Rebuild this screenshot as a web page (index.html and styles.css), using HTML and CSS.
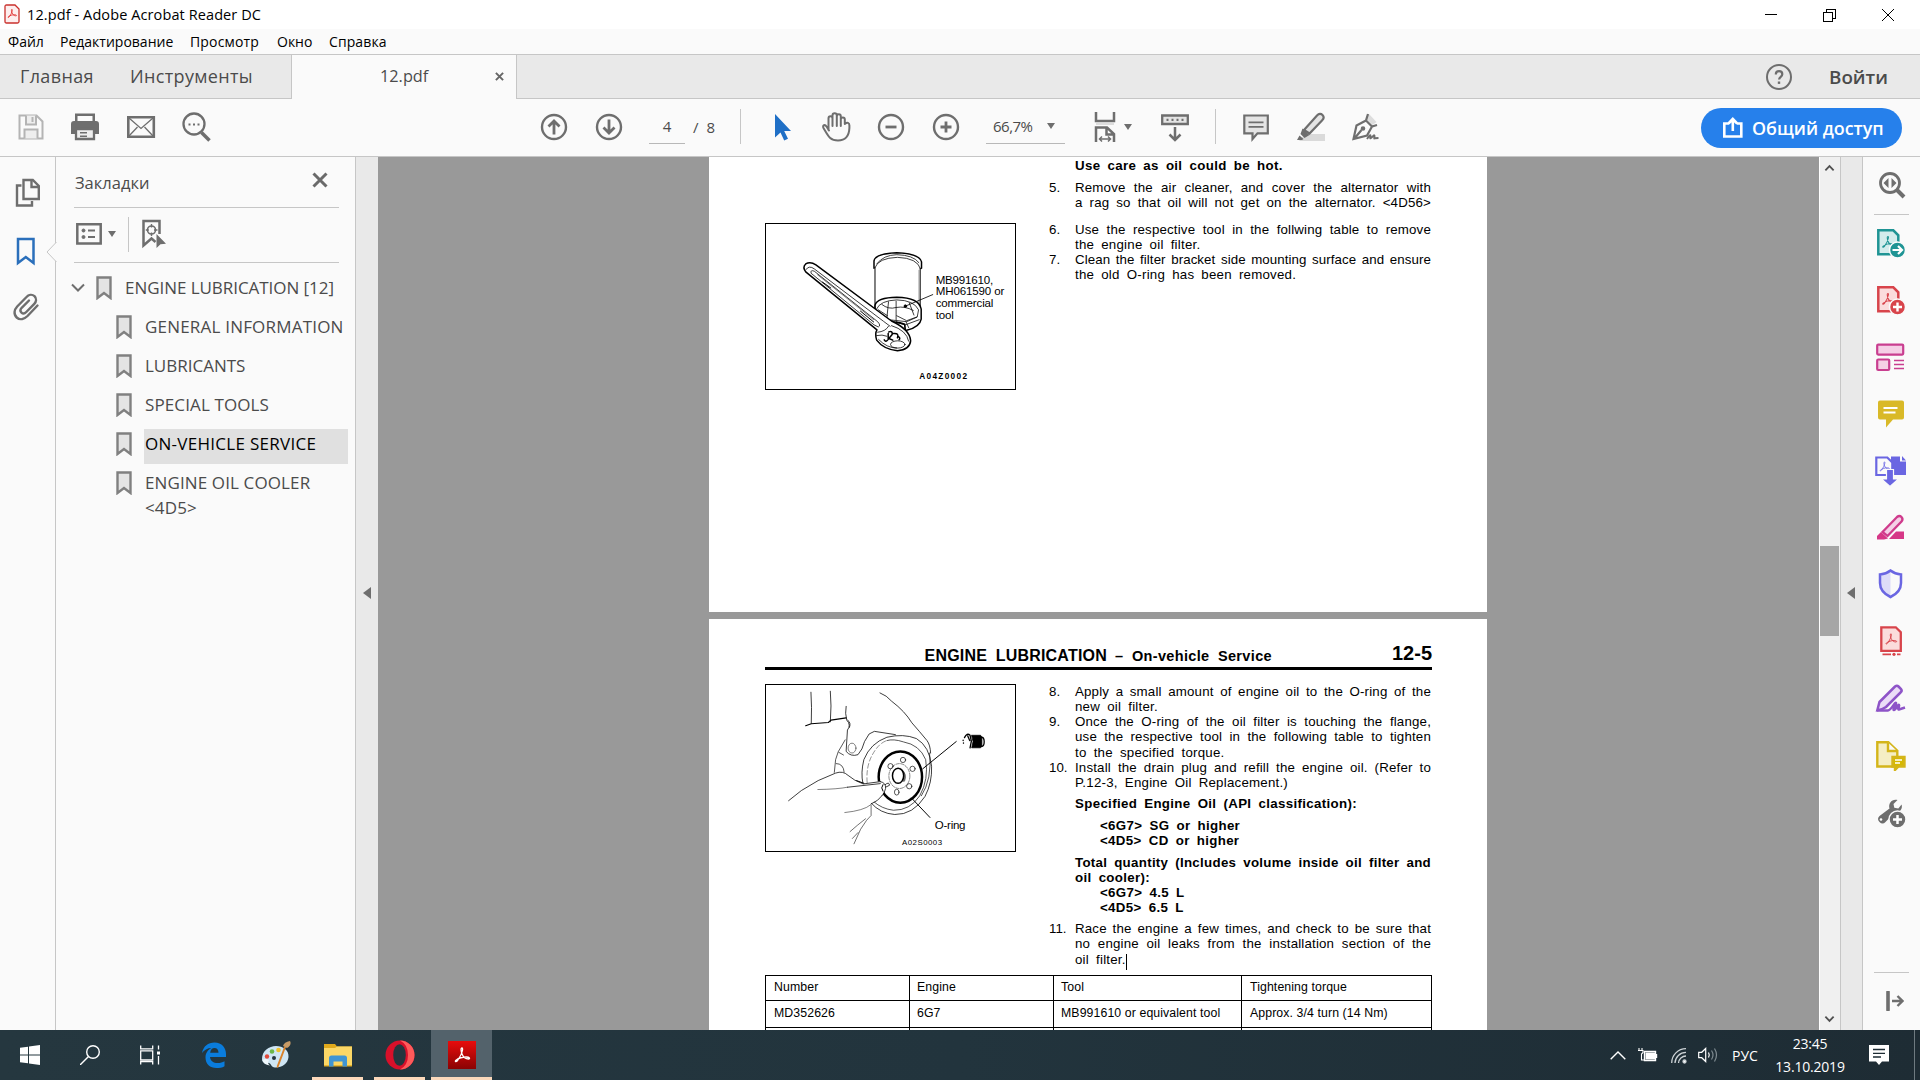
FILE: index.html
```html
<!DOCTYPE html>
<html lang="ru">
<head>
<meta charset="utf-8">
<title>12.pdf - Adobe Acrobat Reader DC</title>
<link rel="stylesheet" href="styles.css">
</head>
<body>
<svg class="defs" width="0" height="0" aria-hidden="true">
  <defs>
    <symbol id="bm" viewBox="0 0 16 24"><path d="M1.5 1.5h13v20.5l-6.500-5-6.500 5z" fill="#e4e4e4" stroke="#808080" stroke-width="2.4"/></symbol>
    <symbol id="acro" viewBox="0 0 20 20"><path d="M10 3c-1.500 0-1 3.500 0 6 1.200 3 4 5 6.500 5 2 0 1-2-2-2-4 0-8 1.300-10.500 3.200-1.500 1.300 0 2.300 1.500.3C8 12 10 8 10.500 5c.2-1.200 0-2-.5-2z" fill="none" stroke="currentColor" stroke-width="1.300"/></symbol>
    <symbol id="circ" viewBox="0 0 32 32"><circle cx="16" cy="16" r="12" fill="none" stroke="#6e6e6e" stroke-width="2.400"/></symbol>
  </defs>
</svg>
<div class="window">
  <header class="titlebar">
    <svg class="app-icon" viewBox="0 0 16 20"><path d="M1 2.500Q1 1 2.500 1H11l4 4v12.500q0 1.500-1.500 1.500h-11Q1 19 1 17.500z" fill="#fdeeee" stroke="#c9302c" stroke-width="1.300"/><use href="#acro" x="2" y="3" width="12" height="13" color="#d22"/></svg>
    <span class="title">12.pdf - Adobe Acrobat Reader DC</span>
    <svg class="win-ctl" viewBox="0 0 130 14" fill="none" stroke="#000" shape-rendering="crispEdges"><path d="M0 6.500h12M58.500 4.500h9v9h-9zM61 4.500v-3h9v9h-2.500"/><path d="M117 1l12 12M129 1l-12 12" shape-rendering="auto"/></svg>
  </header>
  <nav class="menubar"><span class="m1">Файл</span><span class="m2">Редактирование</span><span class="m3">Просмотр</span><span class="m4">Окно</span><span class="m5">Справка</span></nav>
  <div class="tabs">
    <div class="tabs-left"><span class="t1">Главная</span><span class="t2">Инструменты</span></div>
    <div class="tab"><span class="tab-name">12.pdf</span><svg class="tab-x" viewBox="0 0 10 10"><path d="M1 1l8 8M9 1L1 9" stroke="#666" stroke-width="2.200"/></svg></div>
    <div class="tabs-right">
      <svg class="help" viewBox="0 0 28 28" fill="none" stroke="#6e6e6e"><circle cx="14" cy="14" r="12" stroke-width="2"/><path d="M10.800 11.500c0-4.500 6.500-4.200 6.500-.3 0 2.600-3.200 2.600-3.200 5.300" stroke-width="2.200"/><path d="M14 18.500v2.400" stroke-width="2.400"/></svg>
      <span class="login">Войти</span>
    </div>
  </div>
  <div class="toolbar">
    <div class="group g-file">
      <svg viewBox="0 0 32 32" fill="none" stroke="#b4b4b4" stroke-width="2"><path d="M4.500 4.500h17l6 6v17h-23z"/><path d="M11 4.500v9h10v-9M9.500 27.500v-9h13v9" fill="#eee"/><path d="M17.500 6v5"/></svg>
      <svg viewBox="1 0 32 32" fill="#6e6e6e"><path d="M6 2.500h20V10H6zM8.500 5v6h15V5z" fill-rule="evenodd"/><path d="M2 13q0-3 3-3h22q3 0 3 3v10h-4v-4.500H6V23H2z"/><path d="M7 18h18v10H7z" fill="#eee" stroke="#6e6e6e" stroke-width="2.300"/><path d="M11 21h7v1.500h-7zM11 24.500h7V26h-7z"/></svg>
      <svg viewBox="0 0 32 32" fill="none" stroke="#6e6e6e" stroke-width="2.600"><path d="M3.300 6.300h25.500v19.500H3.300z"/><path d="M4 7l12 10.500L28 7M4 25l8.500-9M28 25l-8.500-9" stroke-width="1.300"/></svg>
      <svg viewBox="0 0 32 32" fill="none" stroke="#6e6e6e"><circle cx="14" cy="13" r="10.500" stroke-width="2.300"/><path d="M21.500 21.500l8 8" stroke-width="3.500"/><path d="M8.500 13.500h2M13 13.500h2M17.500 13.500h2" stroke-width="2"/></svg>
    </div>
    <div class="group g-nav">
      <svg viewBox="0 0 32 32" fill="none" stroke="#6e6e6e" stroke-width="2.800"><use href="#circ"/><path d="M16 23.500V10M10.500 15.500L16 10l5.500 5.500"/></svg>
      <svg viewBox="0 0 32 32" fill="none" stroke="#6e6e6e" stroke-width="2.800"><use href="#circ"/><path d="M16 8.500V22M10.500 16.500L16 22l5.500-5.500"/></svg>
    </div>
    <span class="page-no">4</span><span class="page-all"><i>/</i> 8</span>
    <i class="sep s1"></i>
    <div class="group g-zoom">
      <svg viewBox="-1 0 32 32"><path d="M9 3v23.500l5.500-5 3.700 8 3.800-1.800-3.800-7.700H25z" fill="#1f6fc6"/></svg>
      <svg viewBox="0 0 32 32" fill="none" stroke="#6e6e6e" stroke-width="2" stroke-linejoin="round" stroke-linecap="round"><path d="M8.500 19V7.500c0-3 4-3 4 0V15M12.500 15V4.500c0-3 4.300-3 4.300 0V15M16.800 15V5.500c0-3 4-3 4 0V15M20.800 15V8.500c0-2.800 4-2.800 4 0V13c2.500-2 4.600-1.500 4.600 1.500v2.500c-.4 9-4.400 12.500-11.400 12.500-8 0-9.500-4-14.500-12.500-1.500-3 1.500-3.800 3-1.500L9 19.500"/></svg>
      <svg viewBox="0 0 32 32" fill="none" stroke="#6e6e6e" stroke-width="2.800"><use href="#circ"/><path d="M10.500 16h11"/></svg>
      <svg viewBox="0 0 32 32" fill="none" stroke="#6e6e6e" stroke-width="2.800"><use href="#circ"/><path d="M10.500 16h11M16 10.500v11"/></svg>
    </div>
    <div class="zoom-box"><span>66,7%</span><i class="caret"></i></div>
    <svg class="ic fit" viewBox="0 0 32 32" fill="none" stroke="#6e6e6e" stroke-width="2.500"><path d="M7 1v9h18V1M7 31V16.500h11l7 6.500v8M17.500 16.500v7H25"/><path d="M7 12h18v2H7z" fill="#ddd" stroke="none"/><path d="M10.500 28h11M13 25.500L10.500 28l2.500 2.500M19 25.500l2.500 2.500-2.500 2.500" stroke-width="1.500"/></svg>
    <i class="caret c2"></i>
    <svg class="ic read" viewBox="0 0 32 32" fill="none" stroke="#6e6e6e" stroke-width="2.300"><path d="M3.200 4.500h25.600V13H3.200z" fill="#e4e4e4"/><path d="M7.500 8.800h2M12.500 8.800h2M17.500 8.800h2M22.500 8.800h2"/><path d="M16 16v12.500M10.500 23.500l5.500 5.500 5.500-5.500" stroke-width="2.500"/></svg>
    <i class="sep s2"></i>
    <div class="group g-mark">
      <svg viewBox="0 0 32 32" fill="#e4e4e4" stroke="#6e6e6e" stroke-width="2.200"><path d="M4.300 4.500h23.500v17.800H17.500L12.500 28v-5.700H4.300z"/><path d="M8.500 11.300h15M8.500 15.800h15" stroke-width="1.700"/></svg>
      <svg viewBox="0 0 32 32"><path d="M10 23h20v7H4z" fill="#dadada"/><path d="M9 19L22 4.500q3-3 5.500-.5t-.5 5.500L14.500 22.500z" fill="#e4e4e4" stroke="#6e6e6e" stroke-width="2.200"/><path d="M7.500 17.500l7 6.500-5 3-4-4zM4.500 24.500l4 3.500-1.500 1H2z" fill="#6e6e6e"/></svg>
      <svg viewBox="0 0 32 32" fill="none" stroke="#6e6e6e" stroke-width="2.200"><path d="M19 3l7.500 8-4 3-6.500-6.500z" fill="#ddd" stroke="none"/><path d="M18 3l-2 6.500 6 6 5-1.500M16 9.500L6.500 14.500 3.500 28l13.500-3.500 5-9M4 28l7.500-9"/><circle cx="13" cy="17.500" r="1.200"/><path d="M17 28c2-3 3.500-5 3.500-3s-1 3 .5 2 3.500-4 3.500-2-1 3 .5 2.200l3.500-.2" stroke-width="1.900"/></svg>
    </div>
    <button class="share"><svg viewBox="0 0 22 22" fill="none" stroke="#fff" stroke-width="2.600"><path d="M7 6.500H2.300v13h17v-13h-4.500M10.800 14V3M6.500 6.500l4.300-4.500 4.300 4.500"/></svg><span>Общий доступ</span></button>
  </div>

  <main class="work">
    <aside class="rail-left">
      <svg class="rl1" viewBox="0 0 26 30" fill="none" stroke="#6e6e6e" stroke-width="2.400"><path d="M8.500 2h9.300l6 6v13H8.500z"/><path d="M16.500 2v7h7"/><path d="M6.500 7.500H2v20h15V23"/></svg>
      <svg class="rl2" viewBox="0 0 20 30" fill="none" stroke="#2a6fbb" stroke-width="2.500"><path d="M2 2h15.500v24L9.800 20 2 26z"/></svg>
      <svg class="rl3" viewBox="0 0 28 30" fill="none" stroke="#6e6e6e" stroke-width="2.400" stroke-linecap="round"><path d="M25.500 13.500l-10 10.500c-3 3-7.500 4.500-10.800 1.500-3.500-3.300-2.300-8 .5-11L14.500 5c2-2.200 5.500-3 8-.8 2.300 2.300 1.800 5.500-.2 7.600l-8 8.200c-1.500 1.500-3.300 2-4.800.6s-1.200-3.300.2-4.800L17 8.500"/></svg>
    </aside>
    <aside class="panel">
      <svg class="notch" viewBox="0 0 11 20"><path d="M10.500 0L1 10l9.500 10" fill="#fafafa" stroke="#c6c6c6"/></svg>
      <div class="panel-head"><span>Закладки</span><svg viewBox="0 0 16 16"><path d="M1.500 1.500l13 13M14.500 1.500l-13 13" stroke="#6a6a6a" stroke-width="3"/></svg></div>
      <div class="panel-tools">
        <svg class="pt1" viewBox="0 0 26 22" fill="none" stroke="#6e6e6e"><path d="M1.300 1.300h23.400v19.200H1.300z" stroke-width="2.500"/><path d="M12 7.500h7M12 14h7" stroke-width="1.800"/><circle cx="7.500" cy="7.500" r="1.500" fill="#6e6e6e"/><circle cx="7.500" cy="14" r="1.500" fill="#6e6e6e"/></svg>
        <i class="caret"></i><i class="pt-sep"></i>
        <svg class="pt2" viewBox="0 0 26 30" fill="none" stroke="#6e6e6e"><path d="M18.500 15V2h-16v24.500l8-7 4 3.500" stroke-width="2.500"/><circle cx="10.500" cy="11" r="4" stroke-width="1.600"/><path d="M10.500 5v3.500M10.500 13.500V17M4.800 11h3M13 11h3.500" stroke-width="1.400"/><path d="M15.500 15v14l4-3.800 5.500-.5z" fill="#6e6e6e" stroke="none"/></svg>
      </div>
      <ul class="tree">
        <li class="root"><svg class="chev" viewBox="0 0 14 10"><path d="M1 1.500l6 6 6-6" fill="none" stroke="#6e6e6e" stroke-width="2"/></svg><svg class="b"><use href="#bm"/></svg><span class="w0">ENGINE LUBRICATION [12]</span></li>
        <li><svg class="b"><use href="#bm"/></svg><span class="w1">GENERAL INFORMATION</span></li>
        <li><svg class="b"><use href="#bm"/></svg><span class="w2">LUBRICANTS</span></li>
        <li><svg class="b"><use href="#bm"/></svg><span class="w3">SPECIAL TOOLS</span></li>
        <li><svg class="b"><use href="#bm"/></svg><span class="w4 sel">ON-VEHICLE SERVICE</span></li>
        <li class="two"><svg class="b"><use href="#bm"/></svg><span class="w5">ENGINE OIL COOLER<br>&lt;4D5&gt;</span></li>
      </ul>
    </aside>
    <div class="splitter sl"><i></i></div>
    <section class="doc">
      <article class="page p1">
        <div class="fig-col">
          <svg class="fig f1" viewBox="45 40 752 500" fill="none" stroke="#000" stroke-width="2.300" stroke-linecap="round" stroke-linejoin="round">
            <path d="M371 174V152Q374 130 440 127 510 130 515 155V174" stroke-width="4.500"/>
            <path d="M374 172Q384 143 442 141 503 143 512 176M380 160Q400 134 440 133 490 134 507 157"/>
            <path d="M374 172V306M511 174V292" stroke-width="3"/><path d="M507 180V286" stroke-width="1"/>
            <path d="M374 306V286Q380 263 440 262 508 263 514 298V328Q510 352 470 362" stroke-width="4.500"/>
            <path d="M379 297Q390 272 440 270 492 271 506 300L502 322 470 336 415 330 384 308M415 276L410 325M438 274V330M478 279L492 316M395 284Q415 300 438 293 465 288 490 302M384 300L412 318M440 318L470 333 500 322M420 332L465 346 508 330M440 334V350M468 336L476 354"/>
            <path d="M424 341Q440 334 464 344L466 364" stroke-width="5"/>
            <path d="M165 186Q153 171 164 161 178 152 195 164L424 334 Q480 360 482 394 480 420 442 424 400 420 379 392 373 372 380 361Z" fill="#fff" stroke-width="4.500"/>
            <path d="M165 178Q174 164 190 176L400 335 420 350M180 188Q178 178 190 183L382 336Q393 348 384 352L372 346Z"/>
            <path d="M200 194L370 330" stroke-width="1.500"/><path d="M215 216L240 234M330 304L370 337" stroke-width="3"/>
            <path d="M382 368Q406 366 415 350M379 378Q396 374 410 380M424 348Q470 362 476 395M385 390Q410 416 440 416"/>
            <ellipse cx="443" cy="405" rx="22" ry="11"/><path d="M416 367q12-4 10 8l-10 12 12 5M414 372v18M430 372q18-2 12 13M402 391q5 8 10 1M445 381q7 5 2 10" stroke-width="4.500"/>
            <path d="M466 289L549 254" stroke-width="2.500"/><circle cx="466" cy="289" r="4" fill="#000"/>
            <g class="cap"><text x="558" y="222" textLength="174">MB991610,</text><text x="558" y="255" textLength="208">MH061590 or</text><text x="558" y="291" textLength="175">commercial</text><text x="558" y="327" textLength="55">tool</text></g>
            <text class="code" x="508" y="511" textLength="145">A04Z0002</text>
          </svg>
        </div>
        <div class="text">
          <div class="ln bold w">Use care as oil could be hot.</div>
          <div class="step mt7"><b>5.</b><div><div class="j">Remove the air cleaner, and cover the alternator with</div><div class="j">a rag so that oil will not get on the alternator. &lt;4D56&gt;</div></div></div>
          <div class="step mt12"><b>6.</b><div><div class="j">Use the respective tool in the follwing table to remove</div><div class="w">the engine oil filter.</div></div></div>
          <div class="step"><b>7.</b><div><div class="j tight">Clean the filter bracket side mounting surface and ensure</div><div class="w">the old O-ring has been removed.</div></div></div>
        </div>
      </article>
      <article class="page p2">
        <div class="page-head"><h1><span class="h-a">ENGINE LUBRICATION</span> <span class="h-b">– On-vehicle Service</span></h1><span class="pg">12-5</span></div>
        <div class="cols">
        <div class="fig-col">
          <svg class="fig f2" viewBox="45 43 752 505" fill="none" stroke="#000" stroke-width="2.300" stroke-linecap="round" stroke-linejoin="round">
            <path d="M179 65Q182 110 180 160M238 62Q242 105 238 155M286 108Q282 130 288 150 302 165 290 180L286 245Q300 262 322 255 336 240 342 215L356 192 372 184 436 194M291 150Q302 158 296 172"/>
            <path d="M163 167L180 161 232 157 240 150 286 143" stroke-width="3.500"/>
            <path d="M389 67Q410 75 424 92 445 108 460 124 475 140 486 158 510 185 532 212 542 225 543 250"/>
            <ellipse cx="304" cy="235" rx="12" ry="15" stroke-width="1.500"/><path d="M283 210L262 246 254 270 250 310M264 248l14 8M256 282q22 0 24 26" stroke-width="2"/>
            <path d="M362 402Q390 434 434 437 490 438 526 382 548 340 546 290 540 230 500 206 460 190 410 202 360 220 340 270 330 310 337 342"/>
            <path d="M540 250Q548 330 515 380M410 212Q430 206 460 216 510 225 528 270 538 330 510 380 480 425 430 424 395 420 370 398" stroke-width="2"/>
            <path d="M350 340Q346 290 366 255 385 220 410 212" stroke-width="1.300" stroke-dasharray="14 8"/>
            <ellipse cx="451" cy="323" rx="66" ry="78" stroke-width="7.500"/>
            <ellipse cx="448" cy="320" rx="32" ry="38" stroke-width="1.400" stroke-dasharray="10 4"/>
            <ellipse cx="444" cy="319" rx="17" ry="23" stroke-width="4.500"/><path d="M452 296q16 16 8 40M456 300q14 12 6 36M458 303q14 14 6 32" stroke-width="1.500"/>
            <g stroke-width="2"><circle cx="459" cy="271" r="8"/><circle cx="421" cy="290" r="8"/><circle cx="488" cy="298" r="8"/><circle cx="478" cy="351" r="8"/><ellipse cx="440" cy="369" rx="7" ry="9"/></g>
            <path d="M250 310Q270 303 286 312 306 330 338 343L390 336Q408 344 405 364L395 378Q380 396 345 412L300 430 200 380Z" fill="#fff" stroke="none"/>
            <path d="M111 395L150 364Q200 330 254 311 276 303 292 318 310 334 338 344L390 337M290 354L390 343M390 337Q408 340 406 358 402 376 395 380M405 346q12-10 13 2l-10 5M395 380Q385 395 362 405"/>
            <path d="M200 361Q260 360 290 354M360 408Q340 425 282 431" stroke-width="1.500"/>
            <path d="M398 346q-8 10 0 20M318 334L340 342" stroke-width="3"/>
            <path d="M362 408V440L348 455 330 482 310 526M345 450L320 470 298 489M322 492L305 510" stroke-width="1.700"/>
            <path d="M519 298L621 215M485 387L541 446" stroke-width="3"/>
            <path d="M668 196h27l4 6v26l-4 6h-27l4-18z" fill="#000"/><path d="M698 202q8 0 8 14t-8 14" stroke-width="4"/><path d="M646 203q8-16 17-7l4 18-4 20M656 198l6 14M642 211v1M643 219v1" stroke-width="4"/>
            <text class="oring" x="556" y="480" textLength="93">O-ring</text><text class="code c-b" x="456" y="530" textLength="122">A02S0003</text>
          </svg>
        </div>
        <div class="text">
          <div class="step"><b>8.</b><div><div class="j">Apply a small amount of engine oil to the O-ring of the</div><div class="w">new oil filter.</div></div></div>
          <div class="step"><b>9.</b><div><div class="j">Once the O-ring of the oil filter is touching the flange,</div><div class="j">use the respective tool in the following table to tighten</div><div class="w">to the specified torque.</div></div></div>
          <div class="step"><b>10.</b><div><div class="j">Install the drain plug and refill the engine oil. (Refer to</div><div class="w">P.12-3, Engine Oil Replacement.)</div></div></div>
          <div class="ln bold w mt6">Specified Engine Oil (API classification):</div>
          <div class="ln bold w in mt7">&lt;6G7&gt; SG or higher</div>
          <div class="ln bold w in">&lt;4D5&gt; CD or higher</div>
          <div class="ln bold j mt6">Total quantity (Includes volume inside oil filter and</div>
          <div class="ln bold w">oil cooler):</div>
          <div class="ln bold w in">&lt;6G7&gt; 4.5 L</div>
          <div class="ln bold w in">&lt;4D5&gt; 6.5 L</div>
          <div class="step mt6"><b>11.</b><div><div class="j">Race the engine a few times, and check to be sure that</div><div class="j">no engine oil leaks from the installation section of the</div><div class="w">oil filter.<i class="cursor"></i></div></div></div>
        </div>
        </div>
        <table class="torque">
          <tr><td>Number</td><td>Engine</td><td>Tool</td><td>Tightening torque</td></tr>
          <tr><td>MD352626</td><td>6G7</td><td>MB991610 or equivalent tool</td><td>Approx. 3/4 turn (14 Nm)</td></tr>
          <tr><td></td><td></td><td></td><td></td></tr>
        </table>
      </article>
    </section>
    <div class="scroll">
      <svg viewBox="0 0 12 8"><path d="M1.500 6.500L6 2l4.500 4.500" fill="none" stroke="#505050" stroke-width="2"/></svg>
      <i class="thumb"></i>
      <svg viewBox="0 0 12 8"><path d="M1.500 1.500L6 6l4.500-4.500" fill="none" stroke="#505050" stroke-width="2"/></svg>
    </div>
    <div class="splitter sr"><i></i></div>
    <aside class="rail-right">
      <svg class="r0" viewBox="0 0 32 32" fill="none" stroke="#6e6e6e"><circle cx="14" cy="14" r="9.500" stroke-width="2.800"/><path d="M21 21l7 7" stroke-width="4"/><path d="M12.500 9v10L7.500 14zM15.500 9v10l5-5z" fill="#6e6e6e" stroke="none"/></svg>
      <i class="rule"></i>
      <div class="rr-list">
        <svg viewBox="0 0 32 32"><path d="M4.300 3.300h15l5 5v19h-20z" fill="#d3ecec" stroke="#1f9494" stroke-width="2.500"/><use href="#acro" x="6" y="7" width="16" height="16" color="#1f9494"/><circle cx="23.500" cy="23" r="8" fill="#1f9494" stroke="#fafafa" stroke-width="1.500"/><path d="M18.500 23h9M24 19l4 4-4 4" stroke="#fff" stroke-width="2.200" fill="none"/></svg>
        <svg viewBox="0 0 32 32"><path d="M4.300 3.300h15l5 5v19h-20z" fill="#fbdcdc" stroke="#d8444b" stroke-width="2.500"/><use href="#acro" x="6" y="7" width="16" height="16" color="#d8444b"/><circle cx="23.500" cy="23" r="8" fill="#d8444b" stroke="#fafafa" stroke-width="1.500"/><path d="M19 23h9M23.500 18.500v9" stroke="#fff" stroke-width="2.400"/></svg>
        <svg viewBox="0 0 32 32" fill="#f5cfe6" stroke="#c93e90" stroke-width="2.200"><rect x="3.200" y="3.600" width="26" height="10" rx="1"/><rect x="3.200" y="18.500" width="12" height="10.500" rx="1"/><path d="M20 19.500h10M20 23.500h10M20 27.500h10" stroke-width="1.500"/></svg>
        <svg viewBox="0 0 32 32"><path d="M4 4.500Q4 2.500 6 2.500h22q2 0 2 2v15q0 2-2 2h-9l-7 8v-8H6q-2 0-2-2z" fill="#d9b928"/><path d="M9.500 10h14M9.500 14.500h12" stroke="#fff" stroke-width="2"/></svg>
        <svg viewBox="0 0 32 32"><path d="M17 1.500h9v5h6V20H17z" fill="#6a66e2"/><path d="M28 1v4.500h4z" fill="#6a66e2"/><path d="M2.300 2.500h11l5 5V20h-16z" fill="#fafafa" stroke="#6a66e2" stroke-width="2.200"/><use href="#acro" x="4" y="5" width="13" height="13" color="#6a66e2"/><path d="M12.500 14.500h7V24h5l-8.500 7.500L7.500 24h5z" fill="#6a66e2" stroke="#fafafa" stroke-width="1.200"/></svg>
        <svg viewBox="0 0 32 32"><path d="M8.500 21L23 6q2.500-2 4.500 0t0 4.500L13.500 25z" fill="#f5cfe6" stroke="#cf3b8c" stroke-width="2.300"/><path d="M15 28l7-7.500h8V28zM7 21l7 6.500-4 1H3V25z" fill="#d63787"/></svg>
        <svg viewBox="0 0 32 32"><path d="M16.500 3v25C10 24.500 6 20 6 14V6.500q6 0 10.500-3.500z" fill="#dddcf8"/><path d="M16.500 2.500Q21 6 27 6.500V15q0 9-10.500 14Q6 24 6 15V6.500Q12 6 16.500 2.500z" fill="none" stroke="#6a66e2" stroke-width="2.500"/></svg>
        <svg viewBox="0 0 32 32"><path d="M7.300 2.300h14.500l5 5v18.500H7.300z" fill="#fbdcdc" stroke="#d8444b" stroke-width="2.300"/><use href="#acro" x="9.500" y="6.500" width="15" height="15" color="#d8444b"/><path d="M8.500 29.300h8.500M23 29.300h3.500" stroke="#d8444b" stroke-width="1.800"/><circle cx="20" cy="29.300" r="1.600" fill="#d8444b"/></svg>
        <svg viewBox="0 0 32 32" fill="none" stroke="#8e54c8" stroke-width="2.500"><path d="M5.500 20L21 4.500q2-1.500 3.500 0L27 7q1.500 2-.5 3.500L12 25q-4 3-8.700 3.300z" fill="#ebdcf7"/><path d="M3 28.500h11c3 0 7-9 8-7.500s-4 7-2 7 4-6 5-5-2 4.500 0 4.500l6-2"/></svg>
        <svg viewBox="0 0 32 32" fill="#f5eec4" stroke="#d4b51a" stroke-width="2.400"><path d="M3.300 3.300h11l9 8.500V27.500h-20z"/><path d="M14 3.500v8.500h9" fill="#fafafa"/><path d="M18.500 18h12v9.500h-6L21 31v-3.500h-2.500z" fill="#d6b800"/><path d="M21 21h7M21 24h5" stroke="#fff" stroke-width="1.400"/></svg>
        <svg viewBox="0 0 32 32"><path d="M5.500 26q-3-3 0-6l10-7.500c-1.500-5 2.500-10 8-8.500l-4 4 .8 3.800 4 .8 3.300-4c1.500 5-3 9-7 7.900L11.500 26q-3 3-6 0z" fill="#6e6e6e"/><circle cx="7" cy="23.500" r="1.300" fill="#fff"/><circle cx="23.500" cy="23.500" r="8.500" fill="#6e6e6e" stroke="#fafafa" stroke-width="1.500"/><path d="M19 23.500h9M23.500 19v9" stroke="#fff" stroke-width="2.500"/></svg>
      </div>
      <i class="rule bottom"></i>
      <svg class="collapse" viewBox="0 0 18 20" fill="none" stroke="#6e6e6e"><path d="M2 1v18" stroke-width="3.600" stroke-linecap="round"/><path d="M6 10h10M11.500 5l5 5-5 5" stroke-width="2.400"/></svg>
    </aside>
  </main>

  <footer class="taskbar">
    <div class="tb start"><svg viewBox="0 0 20 20" fill="#fff"><path d="M0 2.800L8 1.700v7.800H0zM9 1.500L20 0v9.500H9zM0 10.500h8v7.800l-8-1.100zM9 10.500h11V20L9 18.500z"/></svg></div>
    <div class="tb"><svg viewBox="0 0 20 20" fill="none" stroke="#fff" stroke-width="1.400"><circle cx="13" cy="7" r="6.300"/><path d="M8.500 11.500L0 20"/></svg></div>
    <div class="tb"><svg viewBox="0 0 20 20" fill="none" stroke="#fff" stroke-width="1.300"><path d="M.7.500v3.300h12V.5M.7 5.800h12v9H.7zM.7 19.500v-3h12v3M18.500.5v4M18.500 11v8.500"/><path d="M17 6.500h3v3h-3z" fill="#fff" stroke="none"/></svg></div>
    <div class="tb edge"><svg viewBox="0 0 24 26"><path d="M0 11C1.500 4 6 .5 12.500.5 20 .5 24 6 24 12v3H8c.5 4 3.500 6 7.500 6 3 0 5-.7 7-1.800v5C20 25.700 17.500 26 14.500 26 8 26 3.500 22 3.500 15.500 3.500 11 6 7.500 9.500 6 5.500 6 2 8 0 11zm8.200-.3h8.300c0-3-1.500-4.700-4-4.700s-4 2-4.300 4.700z" fill="#0a7cdc"/></svg></div>
    <div class="tb paint"><svg viewBox="0 0 30 28"><path d="M1 18C1 10 8 5 15 5s13 4 12.500 11S20 27 14 26.500c-4-.3-3.500-3.500-6-4.500-3-1-7 1-7-4z" fill="#cfe6f4"/><path d="M1.500 19q3-2 6.500 0-2 4 1 5.500Q2 23.500 1.500 19z" fill="#eef7fc"/><circle cx="6" cy="15.500" r="2.200" fill="#e24b3c"/><circle cx="11" cy="10.500" r="2.300" fill="#6cb84a"/><circle cx="17.500" cy="9" r="2.300" fill="#f0c22e"/><circle cx="13" cy="17" r="2" fill="#25363f"/><path d="M25 6L17.500 26l-1.800 1 .3-2.500 7.200-19z" fill="#d9822b"/><path d="M22 5q1-4 7-5 2 4-3 7z" fill="#c79b66"/></svg></div>
    <div class="tb run"><svg class="folder" viewBox="0 0 28 24"><path d="M0 1h11l2 2.500h15v20H0z" fill="#e0a91c"/><path d="M0 5h11l2-1.500h15v18.700H0z" fill="#fbd766"/><path d="M5 23.500v-8.500q0-2.500 2.500-2.500h13q2.500 0 2.500 2.500v8.500h-4.500v-5h-9v5z" fill="#3f95d3"/></svg></div>
    <div class="tb run"><svg class="opera" viewBox="0 0 30 30"><circle cx="15" cy="15" r="14.500" fill="#d8102a"/><path d="M15 .5a14.500 14.500 0 0 1 0 29q8-4 8-14.500T15 .5z" fill="#ff5a5a"/><ellipse cx="14.500" cy="15" rx="6.300" ry="10.800" fill="#25363f"/></svg></div>
    <div class="tb run active"><svg class="acrobat" viewBox="0 0 28 28"><defs><linearGradient id="ag" x2="0" y2="1"><stop stop-color="#e80c0c"/><stop offset="1" stop-color="#8a0303"/></linearGradient></defs><path d="M0 0h28v28H0z" fill="url(#ag)"/><use href="#acro" x="4" y="4" width="20" height="20" color="#fff"/></svg></div>
    <div class="tray">
      <svg class="up" viewBox="0 0 16 9"><path d="M.7 8.300L8 1l7.300 7.300" fill="none" stroke="#fff" stroke-width="1.400"/></svg>
      <svg class="bat" viewBox="0 0 20 14"><path d="M6.500 3.500h11v9h-11zM18.500 6v4" fill="none" stroke="#fff" stroke-width="1.400"/><path d="M7.500 4.500h9.500v7H7.500z" fill="#fff"/><path d="M1 0v3M4 0v3M0 2.500h5v2L3.500 6v6h3" fill="none" stroke="#fff" stroke-width="1.100"/></svg>
      <svg class="wifi" viewBox="0 0 16 16" fill="none" stroke="#cdd3d6" stroke-width="1.300"><path d="M.7 15A14.300 14.300 0 0 1 15 .7M4 15A11 11 0 0 1 15 4.300M7.500 15A7.500 7.500 0 0 1 15 8"/><circle cx="13.500" cy="13.500" r="1.500" fill="#fff"/></svg>
      <svg class="vol" viewBox="0 0 20 16" fill="none" stroke="#fff" stroke-width="1.200"><path d="M.7 5.300h3l4-3.800v13l-4-3.800h-3zM10.500 5.500q1.500 2.500 0 5"/><path d="M13.500 3.500q3 4.500 0 9M16.500 1.500q4 6.500 0 13" stroke="#7f8b91"/></svg>
      <span class="lang">РУС</span>
      <span class="clock"><span class="tm">23:45</span><span class="dt">13.10.2019</span></span>
      <svg class="note" viewBox="0 0 20 20"><path d="M0 0h20v16.500h-7L10 20l-3-3.500H0z" fill="#fff"/><path d="M4 4.500h12M4 8.300h12M4 12h8" stroke="#1e2c34" stroke-width="1.300"/></svg>
      <i class="peek"></i>
    </div>
  </footer>
</div>
</body>
</html>
```
FILE: styles.css
```css
* { box-sizing: border-box; }
html, body { margin: 0; padding: 0; height: 100%; overflow: hidden; }
body { font-family: "Open Sans", "Noto Sans", sans-serif; color: #4b4b4b; }
svg { display: block; flex: none; }
.defs { position: absolute; }
.window { width: 1920px; height: 1080px; display: flex; flex-direction: column; background: #fafafa; }

.titlebar { height: 29px; background: #fff; display: flex; align-items: center; padding: 0 25px 0 4px; color: #000; }
.app-icon { width: 16px; height: 20px; margin-right: 7px; margin-top: -1px; }
.title { font-size: 14.500px; letter-spacing: 0.1px; white-space: nowrap; }
.win-ctl { width: 130px; height: 14px; margin-left: auto; }

.menubar { height: 25px; display: flex; align-items: center; font-size: 14px; color: #000; padding-left: 8px; line-height: 20px; }
.menubar span { white-space: nowrap; }
.m1 { width: 52px; } .m2 { width: 130px; } .m3 { width: 87px; letter-spacing: 0.15px; } .m4 { width: 52px; } .m5 { letter-spacing: 0.1px; }

.tabs { height: 45px; border-top: 1px solid #c6c6c6; display: flex; background: #e9e9e9; font-size: 18px; line-height: 24px; }
.tabs-left { width: 292px; border-right: 1px solid #c6c6c6; border-bottom: 1px solid #c6c6c6; display: flex; align-items: center; padding: 0 0 2px 20px; letter-spacing: 0.35px; }
.t1 { width: 110px; }
.tab { width: 224px; background: #fafafa; display: flex; align-items: center; padding: 0 0 2px 88px; }
.tab-name { flex: 1; font-size: 16.300px; }
.tab-x { width: 9px; height: 9px; margin-right: 12px; }
.tabs-right { flex: 1; border-left: 1px solid #c6c6c6; border-bottom: 1px solid #c6c6c6; display: flex; align-items: center; justify-content: flex-end; padding-right: 31px; }
.help { width: 28px; height: 28px; margin-right: 36px; }
.login { font-weight: 600; font-size: 18.800px; width: 60px; }

.toolbar { height: 58px; border-bottom: 1px solid #c6c6c6; display: flex; align-items: center; padding: 0 18px 2px 15px; }
.group { display: flex; gap: 23px; }
.group svg, .ic { width: 32px; height: 32px; flex: none; }
.g-nav { margin-left: 326px; }
.page-no { width: 36px; height: 35px; margin: 0 0 0 24px; border-bottom: 1px solid #b8b8b8; text-align: center; font-size: 15px; line-height: 35px; }
.page-all { margin-left: 8px; width: 24px; font-size: 15px; white-space: nowrap; }
.page-all i { font-style: normal; margin-right: 4px; }
.sep { width: 1px; height: 35px; background: #c6c6c6; }
.s1 { margin-left: 23px; }
.g-zoom { margin-left: 24px; }
.zoom-box { width: 79px; height: 35px; margin-left: 24px; padding-left: 7px; border-bottom: 1px solid #b8b8b8; display: flex; align-items: center; font-size: 15px; letter-spacing: -0.5px; }
.zoom-box span { width: 54px; }
.caret { border: 4.500px solid transparent; border-top: 6px solid #6e6e6e; border-bottom: 0; flex: none; }
.fit { margin-left: 24px; }
.c2 { margin-left: 3px; }
.read { margin-left: 27px; }
.s2 { margin-left: 24px; }
.g-mark { margin-left: 24px; }
.share { margin-left: auto; margin-top: 2px; width: 201px; height: 40px; border: 0; border-radius: 20px; background: #2680eb; color: #fff; display: flex; align-items: center; padding: 0 0 0 21px; font: 600 17.900px "Open Sans", sans-serif; white-space: nowrap; }
.share svg { width: 22px; height: 22px; margin-right: 8px; }

.work { height: 873px; display: flex; }
.rail-left { width: 55px; padding: 21px 0 0 15px; }
.rl1 { width: 26px; height: 30px; }
.rl2 { width: 20px; height: 30px; margin: 29px 0 0 1px; }
.rl3 { width: 28px; height: 30px; margin: 25px 0 0 -3px; }
.panel { position: relative; width: 301px; border-left: 1px solid #c6c6c6; border-right: 1px solid #c6c6c6; }
.notch { position: absolute; left: -10px; top: 85px; width: 11px; height: 20px; }
.panel-head { height: 51px; margin: 0 16px 0 18px; border-bottom: 1px solid #c6c6c6; display: flex; align-items: center; justify-content: space-between; padding: 0 11px 0 1px; font-size: 16.500px; }
.panel-head svg { width: 16px; height: 16px; margin-top: -5px; }
.panel-tools { height: 55px; margin: 0 16px 0 18px; border-bottom: 1px solid #c6c6c6; display: flex; align-items: center; padding: 0 0 2px 2px; }
.pt1 { width: 26px; height: 22px; }
.panel-tools .caret { margin-left: 6px; }
.pt-sep { width: 1px; height: 35px; background: #c6c6c6; margin-left: 12px; }
.pt2 { width: 26px; height: 30px; margin-left: 12px; }
.tree { list-style: none; margin: 5px 0 0; padding: 0; font-size: 17px; line-height: 25px; }
.tree li { height: 39px; display: flex; align-items: center; padding-left: 60px; white-space: nowrap; }
.tree .root { padding-left: 15px; }
.chev { width: 14px; height: 10px; }
.b { width: 16px; height: 24px; margin-right: 12px; }
.root .b { margin: 0 13px 0 11px; }
.tree span { padding-left: 1px; }
.root span { margin-left: -1px; }
.w0 { letter-spacing: -0.05px; } .w1 { letter-spacing: 0.2px; } .w2 { letter-spacing: 0; } .w3 { letter-spacing: 0.12px; } .w4 { letter-spacing: 0.28px; } .w5 { letter-spacing: 0.12px; }
.sel { width: 204px; height: 35px; line-height: 29px; background: #e0e0e0; color: #000; margin-top: 5px; }
.tree .two { height: 64px; align-items: flex-start; }
.two .b { margin-top: 8px; }
.two span { padding-top: 7px; }
.splitter { width: 22px; background: #e9e9e9; display: flex; align-items: center; padding-bottom: 2px; }
.splitter i { border: 6.500px solid transparent; border-right: 8px solid #6e6e6e; border-left: 0; margin: 0 0 0 7px; }
.sr { border-left: 1px solid #c6c6c6; border-right: 1px solid #c6c6c6; width: 23px; }
.sr i { margin-left: 6px; }

.doc { width: 1441px; background: #999; overflow: hidden; display: flex; flex-direction: column; align-items: center; gap: 7px; padding-right: 1px; }
.page { width: 778px; background: #fff; padding: 0 55px 0 56px; color: #000; flex: none; font: 13.3px/15px "Liberation Sans", Arial, sans-serif; }
.p1 { height: 455px; display: flex; }
.p2 { height: 460px; line-height: 15.150px; }
.fig-col { width: 251px; flex: none; }
.fig { width: 251px; height: 167px; border: 1px solid #000; }
.f1 { margin-top: 66px; }
.f2 { height: 168px; }
.fig text { stroke: none; fill: #000; font-family: "Liberation Sans", Arial, sans-serif; font-size: 35px; }
.fig .code { font-size: 25px; font-weight: bold; }
.fig .c-b { font-weight: normal; font-size: 24px; }
.text { width: 380px; margin-left: 33px; white-space: nowrap; }
.p1 .text { padding-top: 1px; }
.ln { margin-left: 26px; width: 355px; }
.in { padding-left: 25px; }
.bold { font-weight: bold; }
.w { word-spacing: 3.200px; letter-spacing: 0.22px; }
.w.bold { letter-spacing: 0.33px; word-spacing: 3.100px; }
.j { text-align: justify; text-align-last: justify; white-space: normal; width: 356px; letter-spacing: 0.17px; }
.j.bold { letter-spacing: 0.3px; }
.tight { letter-spacing: 0.08px; }
.step { display: grid; grid-template-columns: 26px 356px; }
.step > b { font-weight: normal; }
.mt6 { margin-top: 6px; } .mt7 { margin-top: 7px; } .mt12 { margin-top: 12px; }
.cursor { display: inline-block; width: 1px; height: 16px; background: #000; vertical-align: -4px; margin: -2px 0; }
.page-head { height: 51px; border-bottom: 3px solid #000; display: flex; justify-content: flex-end; align-items: flex-end; margin-bottom: 14px; }
.page-head h1 { margin: 0 120px 2px 0; font-size: 15px; line-height: 18px; white-space: nowrap; word-spacing: 4px; }
.h-a { font-size: 16px; letter-spacing: 0.2px; }
.h-b { font-size: 14.500px; letter-spacing: 0.35px; }
.pg { font-size: 20px; font-weight: bold; line-height: 20px; margin-bottom: 4px; }
.cols { display: flex; height: 291px; }
.torque { border-collapse: collapse; width: 667px; table-layout: fixed; font-size: 12.300px; letter-spacing: 0.1px; }
.torque td { border: 1px solid #000; padding: 0 7px 0 8px; height: 25px; white-space: nowrap; }
.torque tr:nth-child(2) td { height: 27px; }
.torque td:nth-child(1), .torque td:nth-child(2) { width: 144px; }
.torque td:nth-child(2), .torque td:nth-child(3) { padding-left: 7px; }
.torque td:nth-child(3) { width: 188px; }
.scroll { width: 21px; background: #f0f0f0; border-left: 1px solid #fff; display: flex; flex-direction: column; align-items: center; padding: 7px 2px 7px 0; }
.scroll svg { width: 11px; height: 8px; }
.thumb { width: 19px; height: 90px; background: #a6a6a6; margin: 374px 0 auto; }

.rail-right { flex: 1; display: flex; flex-direction: column; align-items: center; padding-top: 12px; }
.r0 { width: 32px; height: 32px; }
.rule { width: 35px; height: 1px; background: #c6c6c6; margin-top: 13px; flex: none; }
.rr-list { display: flex; flex-direction: column; gap: 24.900px; padding-top: 12px; }
.rr-list svg { width: 32px; height: 32px; margin-left: -3px; }
.bottom { margin-top: auto; }
.collapse { width: 18px; height: 20px; margin: 18px 0 19px 7px; }

.taskbar { height: 50px; background: linear-gradient(90deg, #25373f, #22343d 50%, #1e2c34); display: flex; color: #fff; }
.tb { width: 60px; display: flex; justify-content: center; align-items: center; border-bottom: 3px solid transparent; padding-top: 2px; }
.tb svg { width: 20px; height: 20px; }
.edge { margin-left: 4px; }
.edge svg { width: 24px; height: 26px; }
.paint { width: 61px; }
.paint svg { width: 30px; height: 28px; margin-left: 2px; }
.tb.run { width: 51px; margin: 0 4px 0 7px; border-color: #fcd9bb; }
.tb .folder { width: 28px; height: 24px; }
.tb .opera { width: 30px; height: 30px; }
.tb.active { width: 61px; margin: 0 0 0 2px; background: #53626b; background-clip: padding-box; }
.tb .acrobat { width: 28px; height: 28px; }
.tray { margin-left: auto; display: flex; align-items: center; width: 310px; }
.up { width: 16px; height: 9px; margin-right: 12px; }
.bat { width: 20px; height: 14px; margin-right: 13px; }
.wifi { width: 16px; height: 16px; margin-right: 11px; margin-top: 2px; }
.vol { width: 20px; height: 16px; margin-right: 14px; }
.lang { font-size: 14px; width: 36px; }
.clock { width: 84px; display: flex; flex-direction: column; align-items: center; font-size: 14px; line-height: 23px; letter-spacing: -0.2px; }
.note { width: 20px; height: 20px; margin-left: 17px; }
.peek { width: 1px; height: 50px; background: #6e7a80; margin-left: 25px; }
```
